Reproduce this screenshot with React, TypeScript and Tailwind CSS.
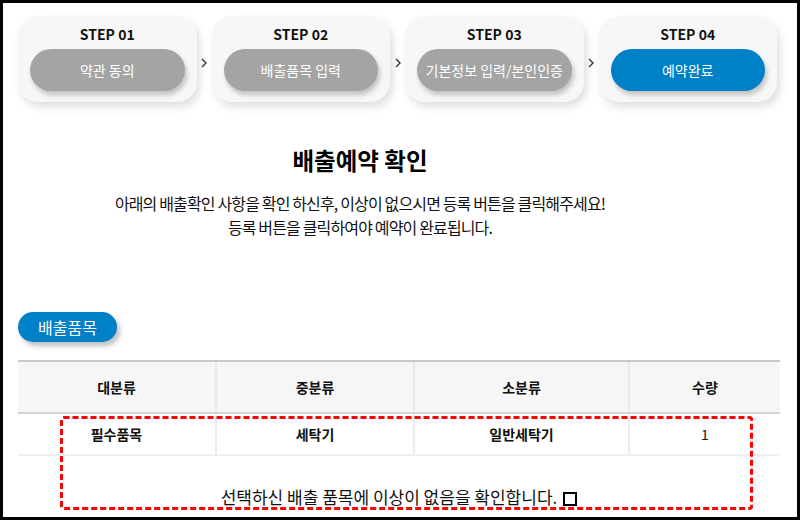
import React from "react";

const steps = [
  { no: "STEP 01", label: "약관 동의", active: false },
  { no: "STEP 02", label: "배출품목 입력", active: false },
  { no: "STEP 03", label: "기본정보 입력/본인인증", active: false },
  { no: "STEP 04", label: "예약완료", active: true },
];

const cols = [
  { head: "대분류", cell: "필수품목", w: "w-[199px]" },
  { head: "중분류", cell: "세탁기", w: "w-[198px]" },
  { head: "소분류", cell: "일반세탁기", w: "w-[215px]" },
  { head: "수량", cell: "1", w: "w-[150px]" },
];

function Chevron() {
  return (
    <svg width="6" height="10" viewBox="0 0 6 10" className="text-[#333]">
      <polyline points="1,1 5,5 1,9" fill="none" stroke="currentColor" strokeWidth="1.4" />
    </svg>
  );
}

function StepCard({ no, label, active }: { no: string; label: string; active: boolean }) {
  return (
    <div className="flex h-[86px] flex-1 flex-col items-center rounded-[20px] bg-[#f7f7f7] px-[12px] pt-[8px] shadow-[3px_5px_9px_rgba(0,0,0,0.13)]">
      <p className="h-[20px] text-[14px] font-semibold leading-[20px] text-[#111]">{no}</p>
      <div
        className={`mt-[5px] flex h-[42px] w-full items-center justify-center rounded-full text-[14px] text-white shadow-[2px_4px_5px_rgba(0,0,0,0.22)] ${
          active ? "bg-[#0081c7]" : "bg-[#a4a4a4]"
        }`}
      >
        {label}
      </div>
    </div>
  );
}

export default function App() {
  return (
    <div className="h-[520px] w-[800px] overflow-hidden border-[3px] border-black bg-white font-['Noto_Sans_CJK_KR',sans-serif] text-[#111]">
      <div className="pl-[15px] pr-[17px] pt-[13px]">
        {/* steps */}
        <div className="flex pr-[3px]">
          {steps.map((s, i) => (
            <React.Fragment key={s.no}>
              {i > 0 && (
                <div className="flex w-[15px] shrink-0 justify-center pt-[42px]">
                  <Chevron />
                </div>
              )}
              <StepCard {...s} />
            </React.Fragment>
          ))}
        </div>

        <div className="pr-[78px]">
          <h1 className="mt-[42px] text-center text-[23.5px] font-bold leading-[32px] text-black">배출예약 확인</h1>
          <div className="mt-[15px] text-center text-[16px] leading-[24px] tracking-[-0.85px] text-[#111]">
            <p>아래의 배출확인 사항을 확인 하신후, 이상이 없으시면 등록 버튼을 클릭해주세요!</p>
            <p>등록 버튼을 클릭하여야 예약이 완료됩니다.</p>
          </div>
        </div>

        <div className="mt-[73px] flex h-[30px] w-[99px] items-center justify-center rounded-full bg-[#0081c7] text-[16px] text-white shadow-[3px_4px_5px_rgba(0,0,0,0.25)]">
          배출품목
        </div>

        {/* table */}
        <div className="relative mt-[18px]">
          <div className="flex h-[54px] border-y-2 border-t-[#c8c8c8] border-b-[#d4d4d4] bg-[#f6f6f6]">
            {cols.map((c, i) => (
              <div
                key={c.head}
                className={`flex items-center justify-center text-[14px] font-bold ${c.w} ${
                  i < 3 ? "border-r-2 border-[#e9e9e9]" : ""
                }`}
              >
                {c.head}
              </div>
            ))}
          </div>
          <div className="flex h-[42px] border-b-2 border-[#efefef]">
            {cols.map((c, i) => (
              <div
                key={c.head}
                className={`flex items-center justify-center text-[14px] ${i < 3 ? "font-bold" : ""} ${c.w} ${
                  i < 3 ? "border-r-2 border-[#ececec]" : ""
                }`}
              >
                {c.cell}
              </div>
            ))}
          </div>
          <div className="flex items-center justify-center gap-[6px] pt-[29px]">
            <p className="text-[17px] leading-[24px] text-[#111]">선택하신 배출 품목에 이상이 없음을 확인합니다.</p>
            <span className="mt-[3px] h-[14px] w-[14px] border-2 border-black" />
          </div>

          {/* annotation */}
          <svg className="pointer-events-none absolute left-[42px] top-[56px]" width="694" height="95">
            <rect x="1.5" y="1.5" width="690" height="91" rx="2" fill="none" stroke="#ff0000" strokeWidth="3" strokeDasharray="6 3" />
          </svg>
        </div>
      </div>
    </div>
  );
}
